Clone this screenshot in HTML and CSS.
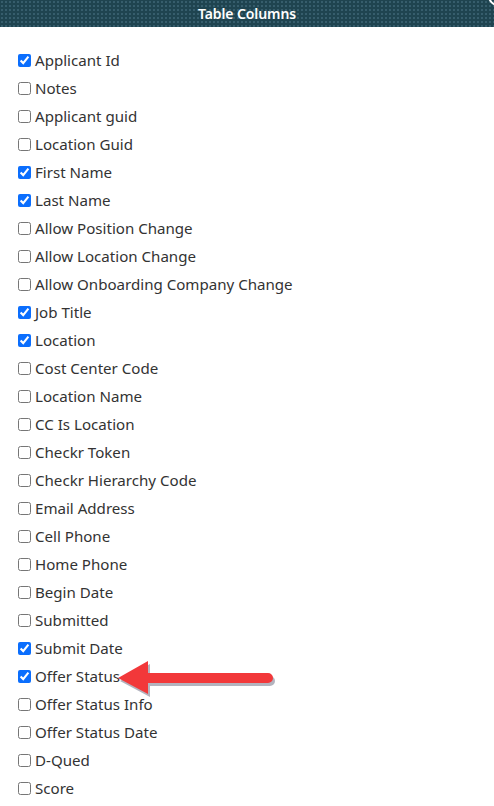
FILE: index.html
```html
<!DOCTYPE html>
<html>
<head>
<meta charset="utf-8">
<link rel="stylesheet" href="styles.css">
</head>
<body>
<div class="header">
  <span class="title">Table Columns</span>
  <span class="close-edge"></span>
</div>
<div class="list">
  <label class="row"><input type="checkbox" checked><span>Applicant Id</span></label>
  <label class="row"><input type="checkbox"><span>Notes</span></label>
  <label class="row"><input type="checkbox"><span>Applicant guid</span></label>
  <label class="row"><input type="checkbox"><span>Location Guid</span></label>
  <label class="row"><input type="checkbox" checked><span>First Name</span></label>
  <label class="row"><input type="checkbox" checked><span>Last Name</span></label>
  <label class="row"><input type="checkbox"><span>Allow Position Change</span></label>
  <label class="row"><input type="checkbox"><span>Allow Location Change</span></label>
  <label class="row"><input type="checkbox"><span>Allow Onboarding Company Change</span></label>
  <label class="row"><input type="checkbox" checked><span>Job Title</span></label>
  <label class="row"><input type="checkbox" checked><span>Location</span></label>
  <label class="row"><input type="checkbox"><span>Cost Center Code</span></label>
  <label class="row"><input type="checkbox"><span>Location Name</span></label>
  <label class="row"><input type="checkbox"><span>CC Is Location</span></label>
  <label class="row"><input type="checkbox"><span>Checkr Token</span></label>
  <label class="row"><input type="checkbox"><span>Checkr Hierarchy Code</span></label>
  <label class="row"><input type="checkbox"><span>Email Address</span></label>
  <label class="row"><input type="checkbox"><span>Cell Phone</span></label>
  <label class="row"><input type="checkbox"><span>Home Phone</span></label>
  <label class="row"><input type="checkbox"><span>Begin Date</span></label>
  <label class="row"><input type="checkbox"><span>Submitted</span></label>
  <label class="row"><input type="checkbox" checked><span>Submit Date</span></label>
  <label class="row"><input type="checkbox" checked><span>Offer Status</span></label>
  <label class="row"><input type="checkbox"><span>Offer Status Info</span></label>
  <label class="row"><input type="checkbox"><span>Offer Status Date</span></label>
  <label class="row"><input type="checkbox"><span>D-Qued</span></label>
  <label class="row"><input type="checkbox"><span>Score</span></label>
</div>
<svg class="arrow" width="180" height="50" viewBox="0 0 180 50">
  <g transform="translate(2,3)" fill="#9a9aa8" opacity="0.75">
    <path d="M2 21 L32 4 L32 16 L152 16 A5 5 0 0 1 152 26 L32 26 L32 37 Z"/>
  </g>
  <path d="M2 21 L32 4 L32 16 L152 16 A5 5 0 0 1 152 26 L32 26 L32 37 Z" fill="#f2383a"/>
</svg>
</body>
</html>
```

FILE: styles.css
```css
html, body {
  margin: 0;
  padding: 0;
  background: #ffffff;
}
body {
  position: relative;
  width: 494px;
  height: 806px;
  overflow: hidden;
  font-family: "Noto Sans", "Open Sans", sans-serif;
  color: #212529;
}
.header {
  position: relative;
  height: 27px;
  background-color: #1f4450;
  background-image: radial-gradient(circle, rgba(90,130,150,0.55) 0.6px, transparent 1px);
  background-size: 4px 4px;
  display: flex;
  align-items: center;
  justify-content: center;
  overflow: hidden;
}
.title {
  color: #ffffff;
  font-size: 14px;
  font-weight: 600;
  letter-spacing: -0.1px;
}
.close-edge {
  position: absolute;
  right: -14px;
  top: -14px;
  width: 16px;
  height: 16px;
  border: 2px solid #ffffff;
  border-radius: 50%;
}
.list {
  display: flex;
  flex-direction: column;
  padding: 19px 0 0 18px;
}
.row {
  display: flex;
  align-items: center;
  height: 28px;
  font-size: 15.1px;
  color: #333;
}
.row input {
  width: 13px;
  height: 13px;
  margin: 0 4px 0 0;
  accent-color: #0b6efd;
}
.arrow {
  position: absolute;
  left: 116px;
  top: 657px;
}
```
